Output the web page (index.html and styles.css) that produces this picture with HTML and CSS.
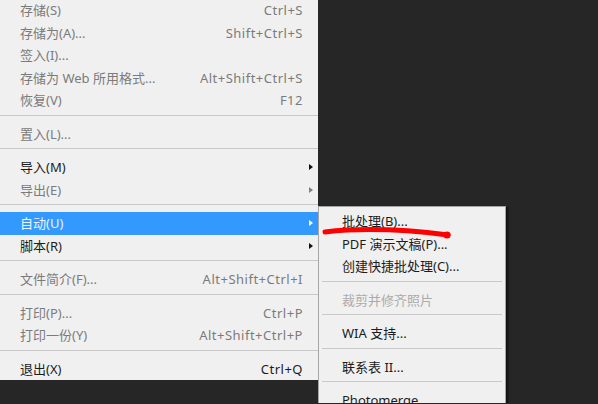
FILE: index.html
```html
<!DOCTYPE html>
<html lang="zh-CN">
<head>
    <meta charset="UTF-8">
    <meta name="viewport" content="width=device-width, initial-scale=1.0">
    <title>文件菜单 - 自动</title>
    <link rel="stylesheet" href="styles.css">
</head>
<body>
    <div class="screen">
        <ul class="menu main-menu">
            <li class="item muted"><span>存储(S)</span><span class="key">Ctrl+S</span></li>
            <li class="item muted"><span>存储为(A)...</span><span class="key">Shift+Ctrl+S</span></li>
            <li class="item muted"><span>签入(I)...</span></li>
            <li class="item muted"><span>存储为 Web 所用格式...</span><span class="key">Alt+Shift+Ctrl+S</span></li>
            <li class="item muted"><span>恢复(V)</span><span class="key">F12</span></li>
            <li class="sep"></li>
            <li class="item muted"><span>置入(L)...</span></li>
            <li class="sep"></li>
            <li class="item sub"><span>导入(M)</span><span class="arrow"></span></li>
            <li class="item muted sub"><span>导出(E)</span><span class="arrow"></span></li>
            <li class="sep"></li>
            <li class="item sub active"><span>自动(U)</span><span class="arrow"></span></li>
            <li class="item sub"><span>脚本(R)</span><span class="arrow"></span></li>
            <li class="sep"></li>
            <li class="item muted"><span>文件简介(F)...</span><span class="key">Alt+Shift+Ctrl+I</span></li>
            <li class="sep"></li>
            <li class="item muted"><span>打印(P)...</span><span class="key">Ctrl+P</span></li>
            <li class="item muted"><span>打印一份(Y)</span><span class="key">Alt+Shift+Ctrl+P</span></li>
            <li class="sep"></li>
            <li class="item"><span>退出(X)</span><span class="key">Ctrl+Q</span></li>
        </ul>

        <ul class="menu submenu">
            <li class="item"><span>批处理(B)...</span></li>
            <li class="item"><span>PDF 演示文稿(P)...</span></li>
            <li class="item"><span>创建快捷批处理(C)...</span></li>
            <li class="sep"></li>
            <li class="item disabled"><span>裁剪并修齐照片</span></li>
            <li class="sep"></li>
            <li class="item"><span>WIA 支持...</span></li>
            <li class="sep"></li>
            <li class="item"><span>联系表 II...</span></li>
            <li class="sep"></li>
            <li class="item"><span>Photomerge...</span></li>
        </ul>

        <!-- red pen mark under 批处理 -->
        <svg class="mark" width="140" height="24" viewBox="0 0 140 24">
            <path d="M7 11 Q 60 5 130 14" fill="none" stroke="#f00" stroke-width="5" stroke-linecap="round"/>
            <circle cx="129" cy="14" r="3.6" fill="#f00"/>
        </svg>
    </div>
</body>
</html>
```

FILE: styles.css
```css
body {
    margin: 0;
    background-color: #262626;
    font-family: "Noto Sans", "Noto Sans CJK SC", sans-serif;
    font-size: 13px;
    overflow: hidden;
}
.screen {
    position: relative;
    width: 598px;
    height: 404px;
}
.menu {
    list-style: none;
    margin: 0;
    padding: 0;
    background-color: #f0f0f0;
}
.main-menu {
    width: 318px;
    margin-top: -1px;
}
.item {
    display: flex;
    justify-content: space-between;
    align-items: center;
    height: 22.5px;
    line-height: 22.5px;
    padding: 0 15px 0 20px;
    color: #1c1c1c;
    white-space: nowrap;
}
.item.muted {
    color: #7b7b7b;
}
.item.disabled {
    color: #ababab;
}
.key {
    letter-spacing: 0.5px;
}
.item.sub {
    padding-right: 5px;
}
.arrow {
    width: 0;
    height: 0;
    border-left: 4px solid #111;
    border-top: 3.5px solid transparent;
    border-bottom: 3.5px solid transparent;
}
.item.muted .arrow {
    border-left-color: #808080;
}
.item.active {
    background-color: #3399ff;
    color: #eaf3ff;
}
.item.active .arrow {
    border-left-color: #fff;
}
.sep {
    margin: 3px 0 7px;
    border-top: 1px solid #c9c9c9;
}
.submenu {
    position: absolute;
    left: 318px;
    top: 207px;
    width: 186px;
    height: 220px;
    padding-top: 3px;
    border: 1px solid #a6a6a6;
    box-shadow: 2px 1px 2px rgba(0, 0, 0, 0.6);
}
.submenu .item {
    padding-left: 23px;
}
.submenu .sep {
    margin: 3px 3px 7px;
}
.mark {
    position: absolute;
    left: 318px;
    top: 222px;
}
```
